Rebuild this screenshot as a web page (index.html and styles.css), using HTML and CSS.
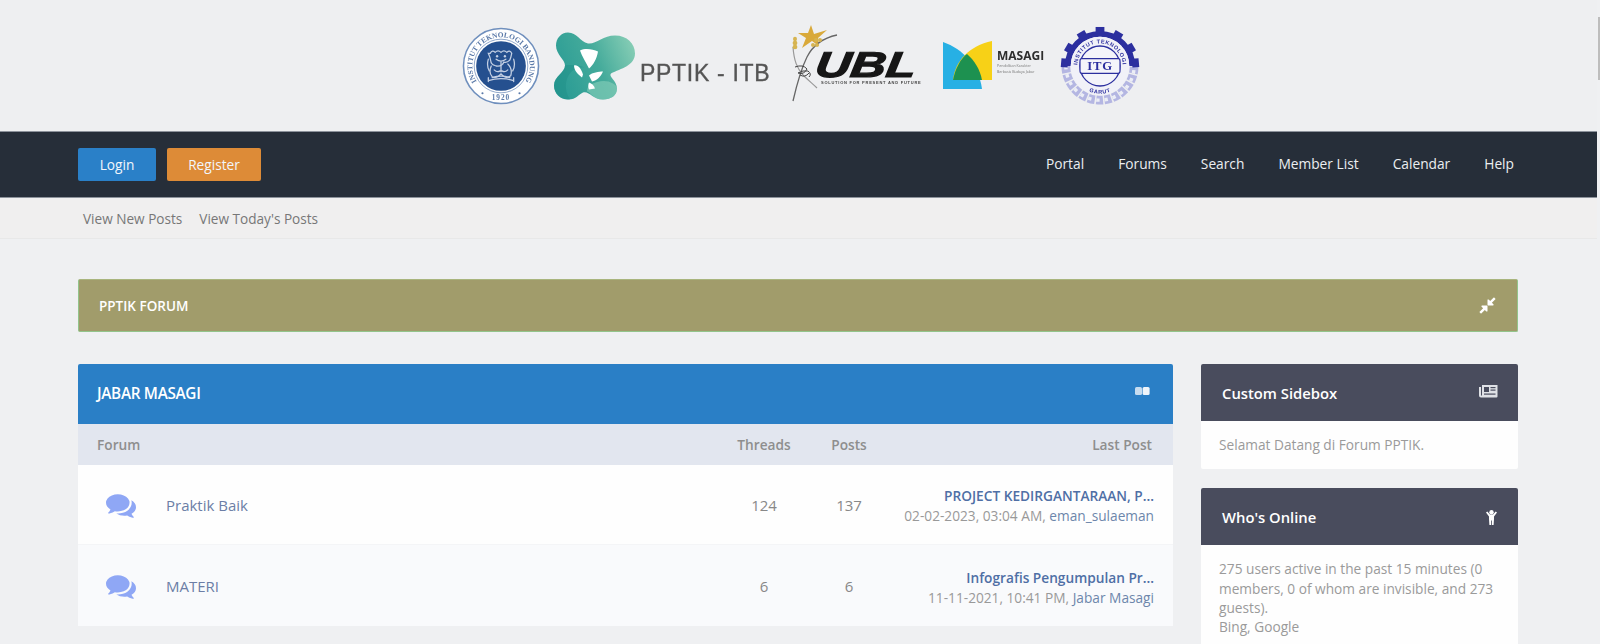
FILE: index.html
```html
<!DOCTYPE html>
<html lang="en">
<head>
<meta charset="utf-8">
<title>PPTIK Forum</title>
<link rel="stylesheet" href="styles.css">
</head>
<body>
<div class="scroll-thumb"></div>
<div class="page">
  <header class="logos">
    <svg class="logo logo-itb" width="78" height="78" viewBox="0 0 80 80" role="img" aria-label="ITB">
      <defs><path id="itbArc" d="M21 62.600A29.500 29.500 0 1 1 59 62.600"/></defs>
      <circle cx="40" cy="40" r="38.500" fill="#fff" stroke="#6f8fbd" stroke-width="1.600"/>
      <circle cx="40" cy="40" r="27.500" fill="#fff" stroke="#8ea6c9" stroke-width="1"/>
      <circle cx="40" cy="40" r="25.500" fill="#25508f"/>
      <text class="itb-ring"><textPath href="#itbArc" startOffset="50%" text-anchor="middle">INSTITUT TEKNOLOGI BANDUNG</textPath></text>
      <text class="itb-year" x="40" y="75" text-anchor="middle">1920</text>
      <circle cx="21" cy="68" r="1.100" fill="#5a79a8"/><circle cx="59" cy="68" r="1.100" fill="#5a79a8"/>
      <g fill="none" stroke="#c4d0e4" stroke-width="1.300" stroke-linecap="round">
        <path d="M29 27q2-4 5-1 3-3 6 0 3-3 6 0 3-3 5 1-1 5-2 7-3 3-6 2-2 5-8 4-4-1-5-3-1-6-3-10z"/>
        <path d="M27 33q-2 7 1 12M53 33q2 7-1 12"/>
        <path d="M30 40q-3 7 1 11 5 2 9-3 5 6 10 2 2-7-3-12"/>
        <path d="M35 33q5 4 10 0M40 36v10M33 44q3 3 6 1M47 44q-3 3-6 1"/>
        <path d="M27 55q13-4 26 0M27 52v4M53 52v4M31 52q9-3 18 0"/>
      </g>
      <circle cx="36" cy="30" r="1.200" fill="#c4d0e4"/><circle cx="44" cy="30" r="1.200" fill="#c4d0e4"/>
    </svg>

    <svg class="logo logo-pptik" width="220" height="70" viewBox="0 0 220 70" role="img" aria-label="PPTIK - ITB">
      <defs>
        <linearGradient id="blobG" gradientUnits="userSpaceOnUse" x1="0" y1="50" x2="82" y2="15">
          <stop offset="0" stop-color="#279a94"/><stop offset=".55" stop-color="#45ab9b"/><stop offset="1" stop-color="#86cdb5"/>
        </linearGradient>
      </defs>
      <g transform="translate(0 1.500)">
        <path fill="url(#blobG)" d="M15 0C24 0 27 9 35 11C43 12 50 3 62 3C74 3 82 11 82 21C82 33 68 36 58 41C55 44 64 48 64 56C64 63 58 67 50 67C40 67 36 58 30 60C25 62 24 67 15 67C7 67 1 61 1 53C1 44 12 40 12 33C12 27 3 22 3 13C3 6 8 0 15 0Z"/>
        <path fill="#1f8f88" opacity=".5" d="M32 35c-8-1-14 3-17 9-4 8-2 17 2 23C8 67 1 61 1 53 1 44 12 40 12 33c6-1 14 0 20 2z"/>
        <path fill="#8fd4bd" opacity=".55" d="M38 52c7-4 16-5 22-1 3 2 4 3 4 5 0 7-6 11-14 11-10 0-13-8-16-8 0-3 1-6 4-7z"/>
        <g fill="#fff">
          <path d="M27 18c6-3 13-1 18 1-1 7-5 14-9 17-3-6-7-12-9-18z"/>
          <path d="M21 33c4-1 7 3 9 9l-1 3c-4-3-8-7-8-12z"/>
          <path d="M36 43c3-3 10-4 14-4-2 5-6 9-11 10-1-2-2-4-3-6z"/>
          <path d="M36 50c3 1 5 3 6 6l-6 1c-1-2-1-5 0-7z"/>
        </g>
      </g>
      <text class="pptik-name" x="87" y="49.500">PPTIK - ITB</text>
    </svg>

    <svg class="logo logo-ubl" width="136" height="78" viewBox="0 0 136 78" role="img" aria-label="UBL">
      <polygon fill="#d9a93a" points="21,0 24,9 37,5 28,13 29,21 22,16 12,23 16,13 8,8 18,8"/>
      <path fill="none" stroke="#666" stroke-width="1.300" d="M47 10C33 13 23 20 17 32c-4 8-8 18-14 44"/>
      <path fill="none" stroke="#999" stroke-width="1.200" d="M3 22c1 14 4 21 10 28 6 6 10 9 14 13"/>
      <path fill="none" stroke="#444" stroke-width="1" d="M5 42q8-3 12 2-3 6-9 4 5-3 10-2 4 3 1 6M10 50q5 3 9-2"/>
      <g fill="#d6b451"><ellipse cx="5" cy="14" rx="2" ry="2.200"/><ellipse cx="5" cy="18" rx="2.400" ry="2.200"/><ellipse cx="5" cy="22" rx="2.400" ry="2.200"/><ellipse cx="26" cy="15" rx="2" ry="2"/><ellipse cx="30" cy="15" rx="2" ry="2"/><ellipse cx="23" cy="20" rx="2" ry="2"/><ellipse cx="27" cy="20" rx="2" ry="2"/></g>
      <text class="ubl-mark" transform="translate(24 52) skewX(-8) scale(1.360 1)">UBL</text>
      <text class="ubl-tag" x="31" y="58.500">SOLUTION FOR PRESENT AND FUTURE</text>
    </svg>

    <svg class="logo logo-masagi" width="102" height="50" viewBox="0 0 102 50" role="img" aria-label="MASAGI">
      <path fill="#27b0e4" d="M0 1C20 8 36 25 39 48H0z"/>
      <path fill="#f7d117" d="M10 39C12 20 26 5 49 0v39z"/>
      <path fill="#1d9150" d="M10 39C12 28 18 17 24 13c7 6 13 15 15 26z"/>
      <text class="masagi-name" x="54" y="19">MASAGI</text>
      <text class="masagi-tag" x="54" y="26">Pendidikan Karakter</text>
      <text class="masagi-tag" x="54" y="32">Berbasis Budaya Jabar</text>
    </svg>

    <svg class="logo logo-itg" width="80" height="80" viewBox="0 0 82 82" role="img" aria-label="ITG">
      <defs>
        <path id="itgTop" d="M18.200 45.500A23.240 23.240 0 1 1 63.800 45.500"/>
        <path id="itgBot" d="M22 62A28 28 0 0 0 60 62"/>
      </defs>
      <path fill="none" stroke="#b4b6e2" stroke-width="9" stroke-dasharray="7 1.500" d="M6 41A35 35 0 0 0 76 41"/>
      <path fill="none" stroke="#eceef6" stroke-width="3.500" stroke-dasharray="3.500 5" d="M6 41A35 35 0 0 0 76 41"/>
      <path fill="none" stroke="#2c2f9f" stroke-width="6" d="M8 41A33 33 0 0 1 74 41"/>
      <g fill="#2c2f9f">
        <rect x="36.500" y="1" width="9" height="7"/><rect x="36.500" y="1" width="9" height="7" transform="rotate(30 41 41)"/><rect x="36.500" y="1" width="9" height="7" transform="rotate(60 41 41)"/><rect x="36.500" y="1" width="9" height="7" transform="rotate(85 41 41)"/><rect x="36.500" y="1" width="9" height="7" transform="rotate(-30 41 41)"/><rect x="36.500" y="1" width="9" height="7" transform="rotate(-60 41 41)"/><rect x="36.500" y="1" width="9" height="7" transform="rotate(-85 41 41)"/>
      </g>
      <circle cx="41" cy="41" r="30" fill="#f1f1f8"/>
      <circle cx="41" cy="41" r="20.500" fill="#f4f4fa" stroke="#2c2f9f" stroke-width="1.300"/>
      <rect x="20.500" y="33.500" width="41" height="15" rx="2" fill="#f4f4fa" stroke="#2c2f9f" stroke-width="1.200"/>
      <text class="itg-mark" x="41" y="45.500" text-anchor="middle">ITG</text>
      <text class="itg-ring"><textPath href="#itgTop" startOffset="50%" text-anchor="middle">INSTITUT TEKNOLOGI</textPath></text>
      <text class="itg-ring"><textPath href="#itgBot" startOffset="50%" text-anchor="middle">GARUT</textPath></text>
    </svg>
  </header>

  <nav class="topbar">
    <div class="auth">
      <a class="btn btn-login">Login</a>
      <a class="btn btn-register">Register</a>
    </div>
    <div class="menu">
      <a>Portal</a><a>Forums</a><a>Search</a><a>Member List</a><a>Calendar</a><a>Help</a>
    </div>
  </nav>

  <div class="subnav">
    <a>View New Posts</a><a>View Today's Posts</a>
  </div>

  <main class="content">
    <section class="banner">
      <span class="banner-title">PPTIK FORUM</span>
      <svg class="icon-compress" viewBox="0 0 1792 1792" width="19" height="19"><path fill="#fff" d="M896 960v448q0 26-19 45t-45 19-45-19l-144-144-332 332q-10 10-23 10t-23-10l-114-114q-10-10-10-23t10-23l332-332-144-144q-19-19-19-45t19-45 45-19h448q26 0 45 19t19 45zm755-672q0 13-10 23l-332 332 144 144q19 19 19 45t-19 45-45 19h-448q-26 0-45-19t-19-45v-448q0-26 19-45t45-19 45 19l144 144 332-332q10-10 23-10t23 10l114 114q10 10 10 23z"/></svg>
    </section>

    <div class="columns">
      <section class="forum">
        <div class="forum-head">
          <h2>JABAR MASAGI</h2>
          <svg class="icon-book" width="15" height="10" viewBox="0 0 15 10"><rect x="0" y="1" width="7" height="8" rx="1.500" fill="#c6dcf0"/><rect x="7.600" y="1" width="7" height="8" rx="1.500" fill="#eef4fa"/></svg>
        </div>
        <div class="forum-grid forum-cols">
          <span>Forum</span><span class="num">Threads</span><span class="num">Posts</span><span class="last-head">Last Post</span>
        </div>
        <div class="forum-grid forum-row row-a">
          <div class="forum-name">
            <svg class="icon-comments" viewBox="0 0 1792 1792" width="30" height="30"><path fill="#8fa7f5" d="M1408 768q0 139-94 257t-256.500 186.500-353.500 68.500q-86 0-176-16-124 88-278 128-36 9-86 16h-3q-11 0-20.500-8t-11.500-21q-1-3-1-6.500t.5-6.500 2-6l2.500-5 3.500-5.500 4-5 4.500-5 4-4.500q5-6 23-25t26-29.500 22.500-29 25-38.500 20.500-44q-124-72-195-177t-71-224q0-139 94-257t256.500-186.500 353.500-68.500 353.500 68.500 256.500 186.500 94 257zm384 256q0 120-71 224.500t-195 176.500q10 24 20.500 44t25 38.500 22.500 29 26 29.500 23 25q1 1 4 4.500t4.500 5 4 5 3.500 5.500l2.500 5 2 6 .5 6.500-1 6.500q-3 14-13 22t-22 7q-50-7-86-16-154-40-278-128-90 16-176 16-271 0-472-132 58 4 88 4 161 0 309-45t264-129q125-92 192-212t67-254q0-77-23-152 129 71 204 178t75 230z"/></svg>
            <a>Praktik Baik</a>
          </div>
          <span class="num">124</span><span class="num">137</span>
          <div class="last">
            <a class="last-title">PROJECT KEDIRGANTARAAN, P...</a>
            <div class="last-meta">02-02-2023, 03:04 AM, <a>eman_sulaeman</a></div>
          </div>
        </div>
        <div class="forum-grid forum-row row-b">
          <div class="forum-name">
            <svg class="icon-comments" viewBox="0 0 1792 1792" width="30" height="30"><path fill="#8fa7f5" d="M1408 768q0 139-94 257t-256.500 186.500-353.500 68.500q-86 0-176-16-124 88-278 128-36 9-86 16h-3q-11 0-20.500-8t-11.500-21q-1-3-1-6.500t.5-6.500 2-6l2.500-5 3.500-5.500 4-5 4.500-5 4-4.500q5-6 23-25t26-29.500 22.500-29 25-38.500 20.500-44q-124-72-195-177t-71-224q0-139 94-257t256.500-186.500 353.500-68.500 353.500 68.500 256.500 186.500 94 257zm384 256q0 120-71 224.500t-195 176.500q10 24 20.500 44t25 38.500 22.500 29 26 29.500 23 25q1 1 4 4.500t4.500 5 4 5 3.500 5.500l2.500 5 2 6 .5 6.500-1 6.500q-3 14-13 22t-22 7q-50-7-86-16-154-40-278-128-90 16-176 16-271 0-472-132 58 4 88 4 161 0 309-45t264-129q125-92 192-212t67-254q0-77-23-152 129 71 204 178t75 230z"/></svg>
            <a>MATERI</a>
          </div>
          <span class="num">6</span><span class="num">6</span>
          <div class="last">
            <a class="last-title">Infografis Pengumpulan Pr...</a>
            <div class="last-meta">11-11-2021, 10:41 PM, <a>Jabar Masagi</a></div>
          </div>
        </div>
      </section>

      <aside class="sidebar">
        <section class="sidebox">
          <div class="side-head">
            <h3>Custom Sidebox</h3>
            <svg class="icon-news" width="19" height="14" viewBox="0 0 19 14"><path fill="#dfe1e6" d="M3 1h15.500v11.500a1 1 0 0 1-1 1H2a2 2 0 0 1-2-2V3h2v8.500h1z"/><rect x="5" y="3" width="5" height="5" fill="#494c5d"/><rect x="11.500" y="3" width="5" height="1.200" fill="#494c5d"/><rect x="11.500" y="5.500" width="5" height="1.200" fill="#494c5d"/><rect x="5" y="9.500" width="11.500" height="1.200" fill="#494c5d"/></svg>
          </div>
          <div class="side-body">Selamat Datang di Forum PPTIK.</div>
        </section>
        <section class="sidebox">
          <div class="side-head">
            <h3>Who's Online</h3>
            <svg class="icon-child" width="11" height="15" viewBox="0 0 11 15"><circle cx="5.500" cy="2.300" r="2.200" fill="#fff"/><path fill="#fff" d="M0 2.500l1.300-1 2.700 3h3l2.700-3 1.300 1-3 4V9l-.4 6H5.900V10.500h-.8V15H3.400L3 9V6.500z"/></svg>
          </div>
          <div class="side-body">275 users active in the past 15 minutes (0 members, 0 of whom are invisible, and 273 guests).<br>Bing, Google</div>
        </section>
      </aside>
    </div>
  </main>
</div>
</body>
</html>
```

FILE: styles.css
```css
html, body {
  margin: 0;
  height: 644px;
  overflow: hidden;
  background: #eff0f2;
  font-family: "Open Sans", "Noto Sans", sans-serif;
  font-size: 13.700px;
  color: #999;
}
* { box-sizing: border-box; }
h2, h3 { margin: 0; }

.scroll-thumb {
  position: absolute;
  top: 17px;
  right: 0;
  width: 2px;
  height: 63px;
  background: #bdbdbd;
}
.page { width: 1597px; }

/* logos */
.logos {
  height: 131px;
  padding-left: 4px;
  background: #eeeff1;
  display: flex;
  align-items: center;
  justify-content: center;
}
.logo { display: block; flex: none; overflow: visible; filter: blur(.45px); }
.logo-pptik { margin-left: 13px; }
.logo-ubl { margin-left: 17px; margin-top: -3px; }
.logo-masagi { margin-left: 17px; margin-top: 1px; }
.logo-itg { margin-left: 15px; }
.itb-ring { font: 700 7.600px "Liberation Serif", serif; fill: #5a79a8; }
.itb-year { font: 700 7.500px "Liberation Serif", serif; fill: #5a79a8; letter-spacing: 1px; }
.pptik-name { font: 400 23px "Liberation Sans", sans-serif; fill: #555; stroke: #555; stroke-width: .35px; letter-spacing: .7px; }
.ubl-mark { font: italic 700 36px "Liberation Sans", sans-serif; fill: #161616; stroke: #161616; stroke-width: 1.200px; }
.ubl-tag { font: 700 4px "Liberation Sans", sans-serif; fill: #444; letter-spacing: .75px; }
.masagi-name { font: 700 12px "Open Sans", sans-serif; fill: #2d2d2d; }
.masagi-tag { font: 400 3.600px "Open Sans", sans-serif; fill: #777; }
.itg-mark { font: 700 13px "Liberation Serif", serif; fill: #2c2f9f; letter-spacing: .8px; }
.itg-ring { font: 700 5.600px "Liberation Sans", sans-serif; fill: #2c2f9f; letter-spacing: .6px; }

/* top bar */
.topbar {
  height: 67px;
  padding: 0 83px 0 78px;
  background: #262e39;
  border-top: 1px solid #8c929b;
  border-bottom: 1px solid #8c929b;
  display: flex;
  align-items: center;
  justify-content: space-between;
}
.auth { display: flex; gap: 11px; }
.btn {
  display: flex;
  align-items: center;
  justify-content: center;
  height: 33px;
  border-radius: 2px;
  color: #f2f6fb;
}
.btn-login { width: 78px; background: #2a80c8; }
.btn-register { width: 94px; background: #dd8b37; }
.menu { display: flex; gap: 34px; color: #eceef1; font-size: 13.750px; padding-bottom: 2px; }

/* sub nav */
.subnav {
  height: 41px;
  padding-left: 83px;
  background: #f0efef;
  border-bottom: 1px solid #e8e8e8;
  display: flex;
  align-items: center;
  gap: 17px;
  color: #777;
  font-size: 13.600px;
}

/* content */
.content { padding: 40px 79px 0 78px; }
.banner {
  height: 53px;
  padding: 0 20px;
  background: #a19c6b;
  border: 1px solid #93c48b;
  border-top-color: #a9b57e;
  border-radius: 2px;
  display: flex;
  align-items: center;
  justify-content: space-between;
  color: #fff;
}
.banner-title { font-size: 13.500px; font-weight: 600; }
.columns { display: flex; gap: 28px; margin-top: 32px; align-items: flex-start; }
.forum { flex: 1; min-width: 0; }

.forum-head {
  height: 60px;
  padding: 0 23px 0 19px;
  background: #2a7fc6;
  border-radius: 2px 2px 0 0;
  display: flex;
  align-items: center;
  justify-content: space-between;
}
.forum-head h2 { font-size: 15.300px; font-weight: 600; color: #fff; letter-spacing: -.3px; margin-top: -2px; }
.icon-book { margin-top: -7px; }

.forum-grid {
  display: grid;
  grid-template-columns: 1fr 84px 86px 262px;
  align-items: center;
  padding-right: 19px;
}
.forum-cols {
  height: 41px;
  padding-left: 19px;
  background: #e2e6ef;
  font-weight: 600;
  color: #8e8e8e;
}
.num { text-align: center; }
.last-head { text-align: right; margin-right: 2px; }
.forum-row { height: 81px; font-size: 15px; color: #888; }
.row-a { height: 80px; background: #fefefe; border-bottom: 1px solid #f4f5f7; }
.row-b { background: #f9fafc; }
.forum-name { display: flex; align-items: center; gap: 30px; padding-left: 28px; color: #6c7ea6; }
.last { text-align: right; font-size: 13.700px; line-height: 19.500px; padding-top: 2px; }
.row-b .last { padding-top: 4px; }
.last-title { display: block; font-weight: 600; color: #4f6fa5; }
.last-meta { color: #999; }
.last-meta a { color: #6d86ab; }

/* sidebar */
.sidebar { flex: none; width: 317px; display: flex; flex-direction: column; gap: 19px; }
.sidebox { background: #fefefe; border-radius: 2px; }
.side-head {
  height: 57px;
  padding: 0 20px 0 21px;
  background: #494c5d;
  border-radius: 2px 2px 0 0;
  display: flex;
  align-items: center;
  justify-content: space-between;
}
.side-head h3 { font-size: 14.800px; font-weight: 600; color: #fff; }
.icon-news { margin-top: -3px; }
.icon-child { margin-top: 1px; margin-right: 1px; }
.side-body { padding: 14px 18px 15px 18px; line-height: 19.300px; color: #9a9a9a; }
```
